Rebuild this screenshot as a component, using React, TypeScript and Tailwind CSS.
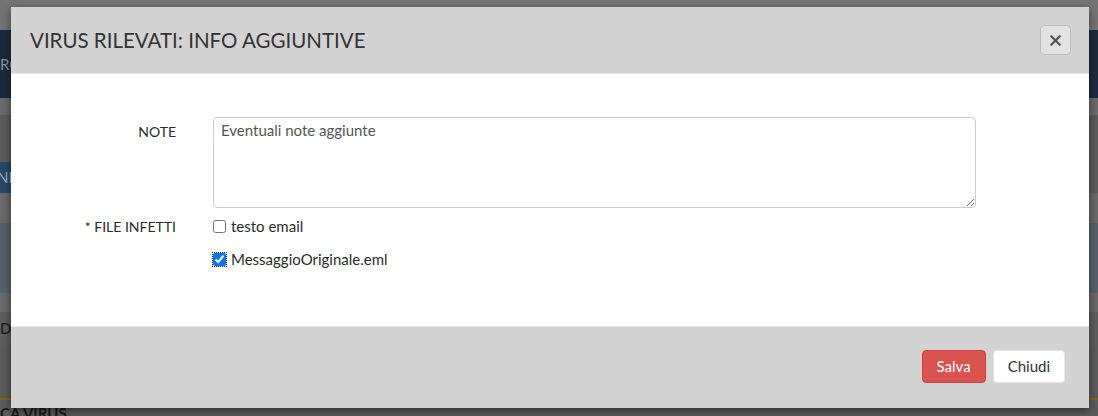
import { X } from "lucide-react";

const font = { fontFamily: "Lato, 'Open Sans', sans-serif" };

function Backdrop() {
  return (
    <div className="flex h-[416px] w-[1098px] flex-col overflow-hidden bg-[#747474] text-[15px]">
      <div className="h-[30px] bg-[#757575]" />
      <div className="flex h-[68px] items-center bg-[#1d2a3f] text-[#8a93a3]">
        <span>RO</span>
      </div>
      <div className="h-[17px] bg-[#6b6b6b]" />
      <div className="h-[47px] bg-[#5c5c5c]" />
      <div className="flex h-[31px] bg-[#5c5c5c]">
        <div className="flex w-[14px] items-center bg-[#27496a] text-[#9fb3c7]">
          <span className="-ml-[3px]">NI</span>
        </div>
      </div>
      <div className="h-[30px] bg-[#6a6a6a]" />
      <div className="h-[70px] bg-[#58616b]" />
      <div className="h-[19px] bg-[#6a6a6a]" />
      <div className="flex h-[33px] items-center bg-[#5e5e5e] text-[#1f1f1f]">
        <span className="font-semibold">DE</span>
      </div>
      <div className="h-[53px] bg-[#5c5c5c]" />
      <div className="h-[2px] bg-[#8a6412]" />
      <div className="flex flex-1 items-end bg-[#5c5c5c] text-[#1a1a1a]">
        <span className="-mb-[8px] font-bold">CA VIRUS</span>
      </div>
    </div>
  );
}

export default function App() {
  return (
    <div className="relative h-[416px] w-[1098px] overflow-hidden" style={font}>
      <Backdrop />

      <div className="absolute left-[11px] top-[7px] flex w-[1078px] flex-col shadow-[0_3px_9px_rgba(0,0,0,0.5)]">
        <div className="flex h-[67px] items-center justify-between border-b border-[#e5e5e5] bg-[#d3d3d3] pl-[19px] pr-[18px]">
          <h4 className="text-[20.5px] leading-none text-[#333]">VIRUS RILEVATI: INFO AGGIUNTIVE</h4>
          <button className="flex h-[30px] w-[31px] items-center justify-center rounded-[4px] border border-[#bcbcbc] bg-[#e2e2e2] text-[#555]">
            <X size={17} strokeWidth={3.2} />
          </button>
        </div>

        <div className="h-[252px] bg-white pt-[43px] text-[14px] text-[#2b2b2b]">
          <div className="flex">
            <label className="w-[165px] pt-[4px] text-right">NOTE</label>
            <textarea
              className="ml-[37px] h-[91px] w-[763px] resize-y rounded-[4px] border border-[#ccc] px-[7px] py-[1px] text-[15px] text-[#555] outline-none"
              defaultValue="Eventuali note aggiunte"
            />
          </div>
          <div className="mt-[8px] flex">
            <label className="h-[20px] w-[165px] pt-[1px] text-right leading-[20px]">* FILE INFETTI</label>
            <div className="ml-[37px] flex flex-col gap-[13px] text-[15px]">
              <label className="flex h-[20px] items-center gap-[5px]">
                <input type="checkbox" className="m-0 h-[13px] w-[13px]" />
                <span>testo email</span>
              </label>
              <label className="flex h-[20px] items-center gap-[5px]">
                <input
                  type="checkbox"
                  defaultChecked
                  className="m-0 h-[13px] w-[13px] outline-1 outline-dotted outline-[#222]"
                />
                <span>MessaggioOriginale.eml</span>
              </label>
            </div>
          </div>
        </div>

        <div className="flex h-[82px] items-start justify-end gap-[7px] border-t border-[#e5e5e5] bg-[#d3d3d3] pr-[24px] pt-[23px] text-[15px]">
          <button className="h-[33px] rounded-[4px] border border-[#d43f3a] bg-[#d9534f] px-[14px] text-white">Salva</button>
          <button className="h-[33px] rounded-[4px] border border-[#e6e6e6] bg-white px-[14px] text-[#333]">Chiudi</button>
        </div>
      </div>
    </div>
  );
}
